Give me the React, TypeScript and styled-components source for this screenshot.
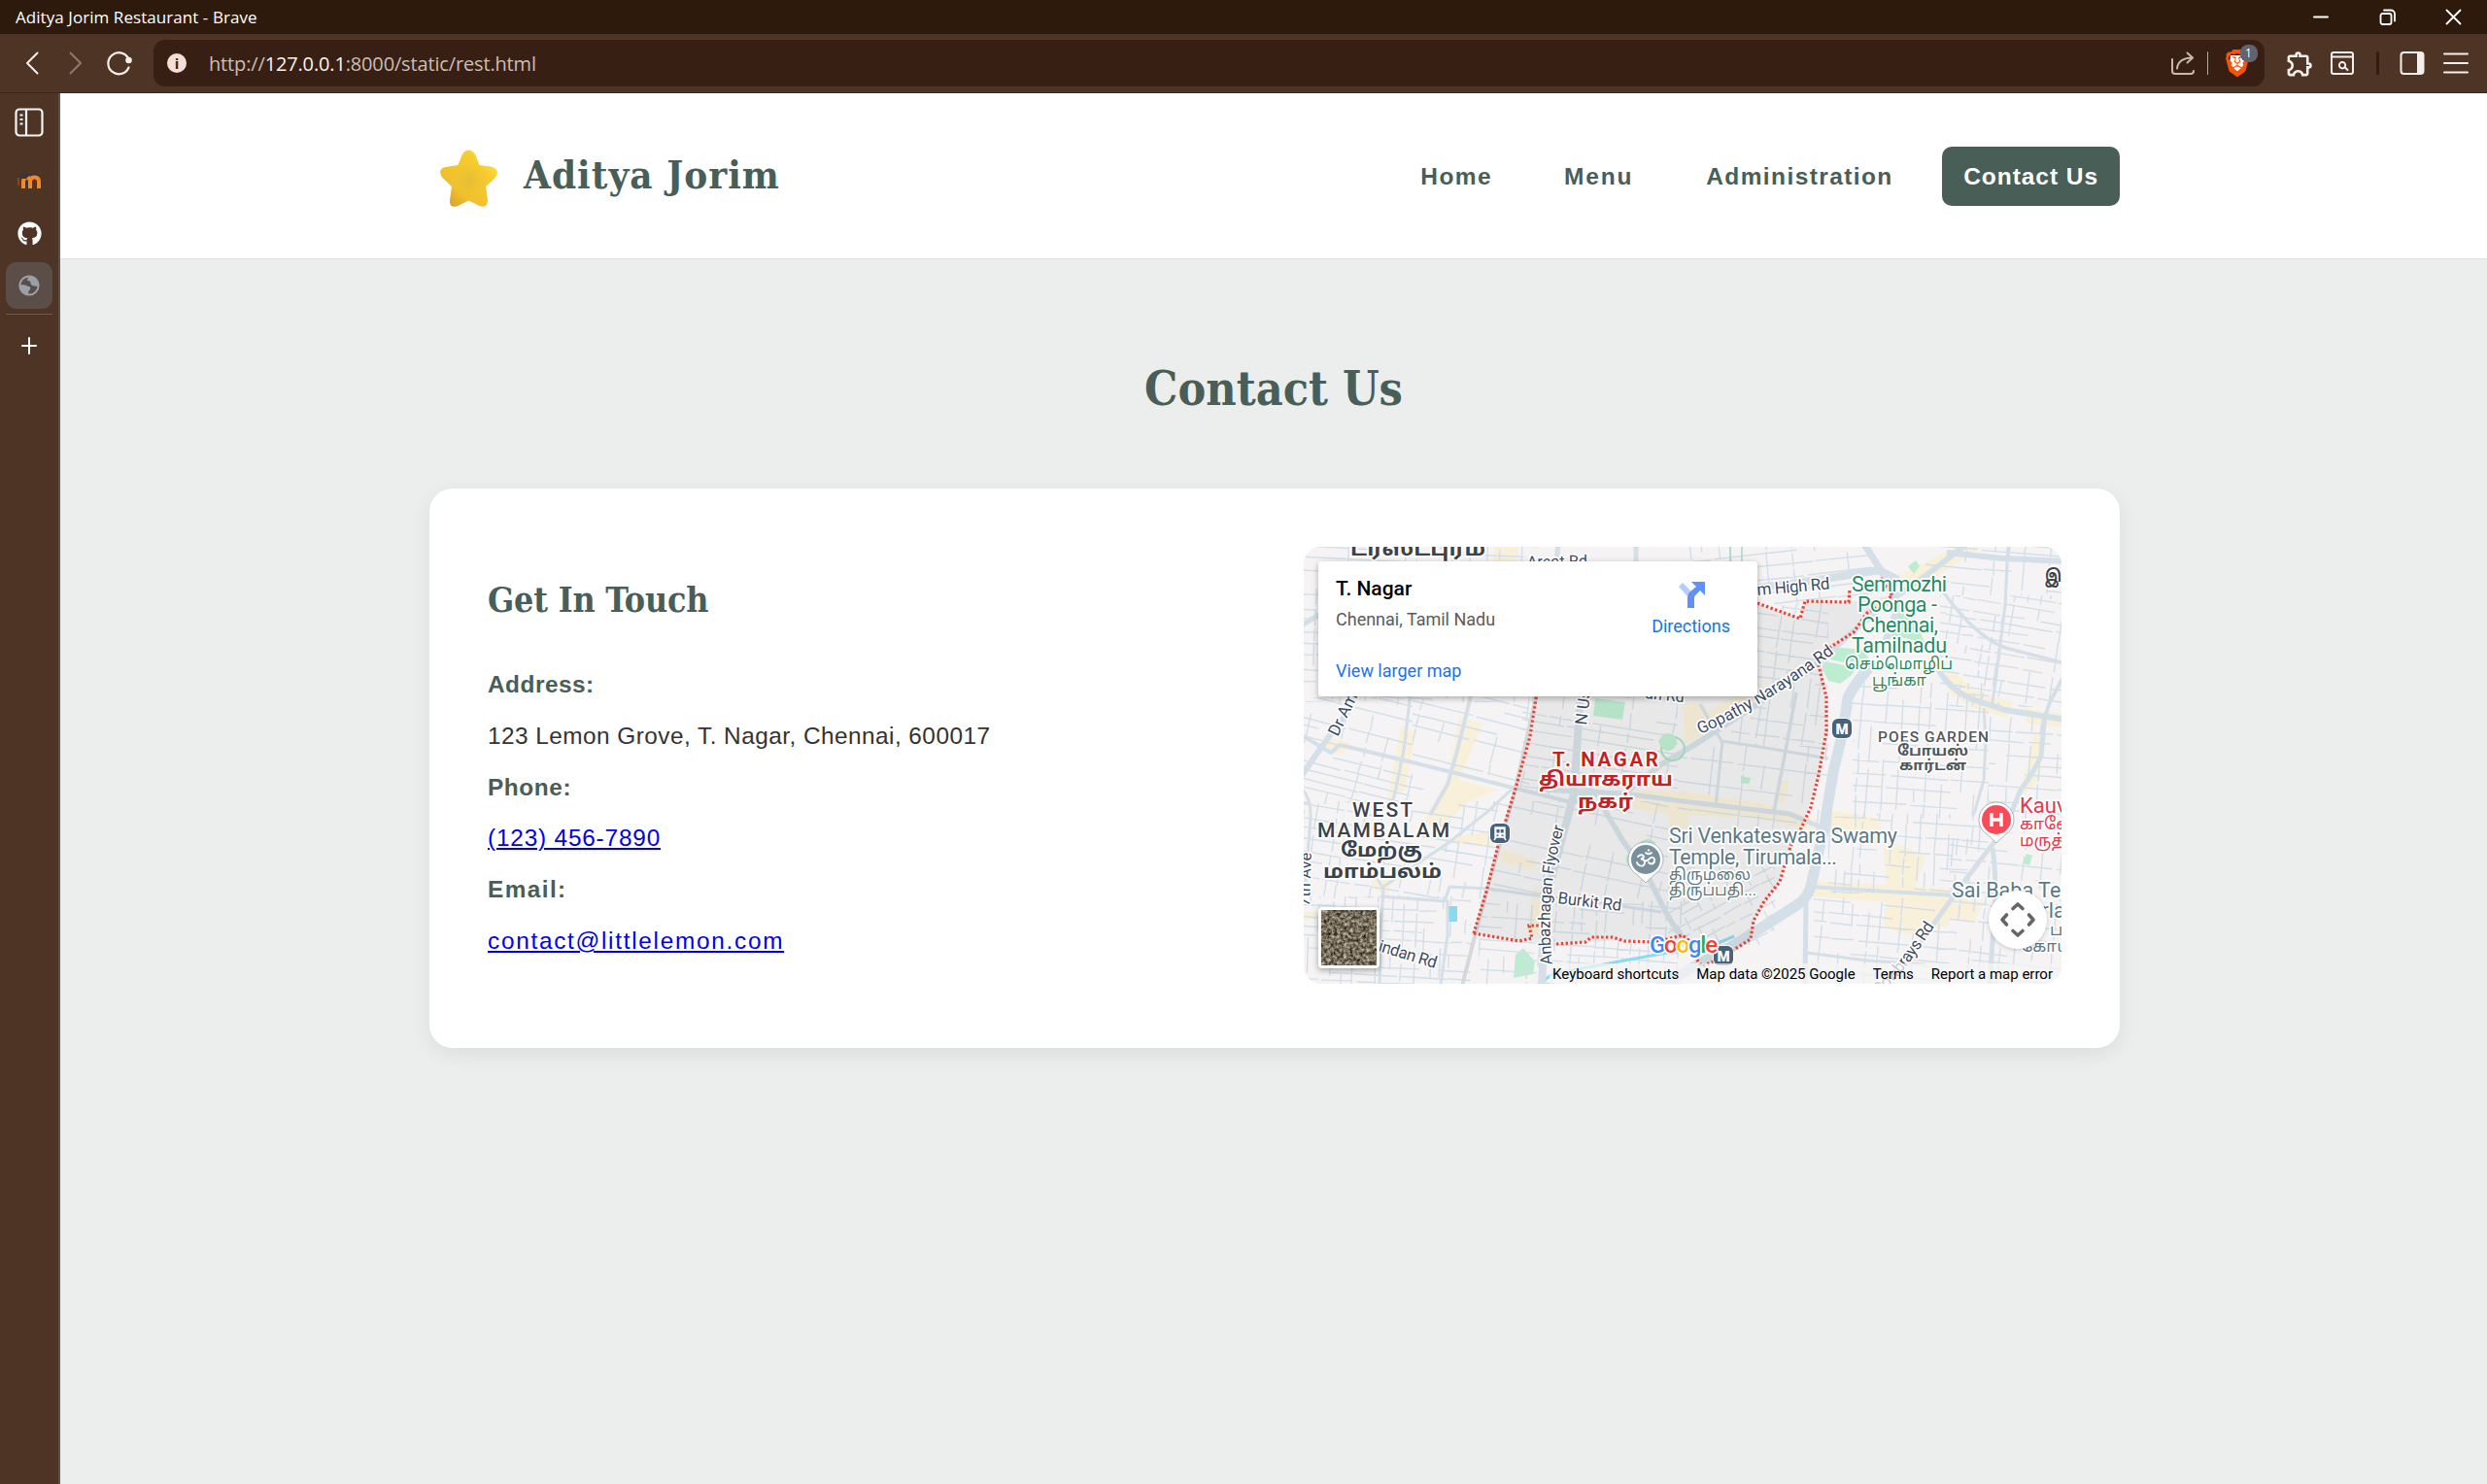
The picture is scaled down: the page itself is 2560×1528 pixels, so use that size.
import React from "react";
import styled, { createGlobalStyle } from "styled-components";
import { FaGithub } from "react-icons/fa";
import { MdOutlineExtension } from "react-icons/md";
import { SiBrave } from "react-icons/si";

const C = {
  title: "#2d1a0c",
  toolbar: "#4e3425",
  field: "#371f13",
  green: "#495e57",
  page: "#eceeed",
};

const GlobalStyle = createGlobalStyle`
  * { box-sizing: border-box; }
  body { margin: 0; background: ${C.page}; font-family: "Liberation Sans", Arial, sans-serif; }
  svg { display: block; }
`;

const Window = styled.div`
  display: flex;
  flex-direction: column;
  width: 2560px;
  height: 1528px;
  overflow: hidden;
`;

const ui = `"Open Sans", "Noto Sans", sans-serif`;

const TitleBar = styled.div`
  display: flex;
  align-items: center;
  justify-content: space-between;
  height: 35px;
  padding-left: 16px;
  background: ${C.title};
  color: #fff;
  font: 400 17px/35px ${ui};
`;

const Track = styled.span<{ $ls: number }>`
  letter-spacing: ${(p) => p.$ls}px;
  white-space: pre;
`;

const Row = styled.div`
  display: flex;
  align-items: center;
`;

const Slot = styled.div<{ $w: number }>`
  display: flex;
  align-items: center;
  justify-content: center;
  width: ${(p) => p.$w}px;
  flex: none;
`;

const Toolbar = styled.div`
  display: flex;
  align-items: center;
  height: 61px;
  padding: 0 9px 0 10px;
  background: ${C.toolbar};
  border-bottom: 1px solid #3b261b;
  color: #f4efec;
`;

const AddressBar = styled.div`
  display: flex;
  align-items: center;
  flex: 1;
  height: 48px;
  margin: 0 14px 0 13px;
  border-radius: 12px;
  background: ${C.field};
`;

const Info = styled.div`
  width: 20px;
  height: 20px;
  margin-left: 14px;
  border-radius: 50%;
  background: #f3dfd7;
  color: ${C.field};
  font: 700 15px/20px ${ui};
  text-align: center;
`;

const Url = styled.div`
  flex: 1;
  margin-left: 23px;
  padding-top: 1px;
  color: #cdbdb3;
  font: 400 20px/47px ${ui};
  b { font-weight: 400; color: #fbf3ee; }
`;

const Rule = styled.div<{ $w: number; $c: string }>`
  width: ${(p) => p.$w}px;
  height: 24px;
  border-radius: 1px;
  background: ${(p) => p.$c};
`;

const Shield = styled.div`
  position: relative;
  width: 24px;
  height: 28px;
  color: #fb5208;
`;

const ShieldMark = styled(SiBrave)`
  position: absolute;
  left: -2px;
  top: 0;
`;

const Badge = styled.div`
  position: absolute;
  left: 15px;
  top: -5px;
  width: 18px;
  height: 18px;
  border-radius: 8px;
  background: #62636e;
  color: #fff;
  font: 400 12px/18px ${ui};
  text-align: center;
`;

const Body = styled.div`
  display: flex;
  flex: 1;
  min-height: 0;
`;

const Side = styled.div`
  display: flex;
  flex-direction: column;
  align-items: center;
  width: 62px;
  padding-top: 14px;
  border-right: 2px solid #5d5150;
  background: ${C.toolbar};
`;

const SideItem = styled.div<{ $h: number; $mb?: number; $active?: boolean }>`
  display: flex;
  align-items: center;
  justify-content: center;
  width: 48px;
  height: ${(p) => p.$h}px;
  margin-bottom: ${(p) => p.$mb ?? 0}px;
  border-radius: 11px;
  background: ${(p) => (p.$active ? "#5b4e49" : "transparent")};
  color: ${(p) => (p.$active ? "#9aa0a8" : "#fff")};
`;

const SideRule = styled.div`
  width: 48px;
  height: 1px;
  background: #6a5a54;
`;

const Page = styled.div`
  display: flex;
  flex-direction: column;
  flex: 1;
  background: ${C.page};
`;

const SiteHeader = styled.header`
  display: flex;
  align-items: center;
  justify-content: space-between;
  height: 171px;
  padding: 0 378px 0 380px;
  background: #fff;
  border-bottom: 1px solid #dee0df;
`;

const serif = `"DejaVu Serif Condensed", "DejaVu Serif", serif`;

const Logo = styled(Row)`
  padding-left: 8px;
  gap: 24px;
`;

const StarBox = styled.div`
  padding-top: 6px;
`;

const Brand = styled.div`
  padding-bottom: 3px;
  color: ${C.green};
  font: 700 40px/60px ${serif};
  font-stretch: condensed;
`;

const Nav = styled.nav`
  display: flex;
  align-items: center;
`;

const NavLink = styled.a<{ $mr?: number; $active?: boolean }>`
  display: block;
  height: 61px;
  margin-right: ${(p) => p.$mr ?? 0}px;
  padding: ${(p) => (p.$active ? "1px 22px 0" : "1px 0 0")};
  border-radius: 10px;
  background: ${(p) => (p.$active ? C.green : "transparent")};
  color: ${(p) => (p.$active ? "#fff" : C.green)};
  font-weight: 700;
  font-size: 24.5px;
  line-height: 60px;
`;

const Heading = styled.h1`
  margin: 103px 0 73px;
  color: ${C.green};
  font: 700 48px/60px ${serif};
  font-stretch: condensed;
  text-align: center;
`;

const Card = styled.section`
  display: grid;
  grid-template-columns: 780px 780px;
  column-gap: 60px;
  width: 1740px;
  height: 576px;
  margin-left: 380px;
  padding: 60px;
  border-radius: 24px;
  background: #fff;
  box-shadow: 0 6px 22px rgba(0, 0, 0, 0.07);
`;

const Touch = styled.div`
  padding-top: 28px;
  font-size: 24.4px;
  line-height: 52.8px;
  color: #333;
`;

const SubHeading = styled.h2`
  margin: 0 0 34px;
  color: ${C.green};
  font: 700 35.5px/54px ${serif};
  font-stretch: condensed;
`;

const Term = styled.div`
  color: ${C.green};
  font-weight: 700;
`;

const Link = styled.a`
  color: #0000ee;
  text-decoration: underline;
  text-decoration-thickness: 2px;
  text-underline-offset: 2px;
`;

const MapFrame = styled.div`
  position: relative;
  width: 780px;
  height: 450px;
  overflow: hidden;
  border-radius: 18px;
  background: #f5f3f4;
  font-family: Roboto, sans-serif;
`;

const PlaceCard = styled.div`
  position: absolute;
  left: 15px;
  top: 15px;
  display: flex;
  justify-content: space-between;
  width: 452px;
  height: 139px;
  padding: 15px 28px 0 18px;
  border-radius: 3px;
  background: #fff;
  box-shadow: 0 2px 6px rgba(0, 0, 0, 0.3);
  font-size: 18px;
  color: #5b5b5b;
`;

const PlaceName = styled.div`
  color: #000;
  font-weight: 500;
  font-size: 21px;
  line-height: 26px;
`;

const PlaceLine = styled.div<{ $mt: number; $link?: boolean }>`
  margin-top: ${(p) => p.$mt}px;
  line-height: 24px;
  color: ${(p) => (p.$link ? "#1a73e8" : "#5b5b5b")};
`;

const Directions = styled.div`
  display: flex;
  flex-direction: column;
  align-items: center;
  padding-top: 6px;
  gap: 6px;
  line-height: 24px;
  color: #1a73e8;
`;

const Thumb = styled.div`
  position: absolute;
  left: 15px;
  top: 371px;
  width: 63px;
  height: 63px;
  border: 3px solid #fff;
  border-radius: 4px;
  overflow: hidden;
  background: #7d7160;
  box-shadow: 0 2px 6px rgba(0, 0, 0, 0.35);
`;

const Camera = styled.div`
  position: absolute;
  left: 705px;
  top: 354px;
  width: 60px;
  height: 60px;
  border-radius: 50%;
  background: #fff;
  box-shadow: 0 1px 4px rgba(0, 0, 0, 0.2);
`;

const Footer = styled.div`
  position: absolute;
  right: 0;
  bottom: 0;
  display: flex;
  height: 21px;
  padding: 0 9px 0 3px;
  gap: 18px;
  background: rgba(245, 245, 245, 0.72);
  color: #000;
  font-size: 15px;
  line-height: 22px;
`;

function rng(seed: number) {
  let s = seed;
  return () => {
    s = (s * 1664525 + 1013904223) % 4294967296;
    return s / 4294967296;
  };
}

type Zone = { x: number; y: number; w: number; h: number; a: number; gx: number; gy: number };

const zones: Zone[] = [
  { x: 0, y: 0, w: 240, h: 160, a: 3, gx: 17, gy: 12 },
  { x: 0, y: 155, w: 112, h: 110, a: 14, gx: 24, gy: 11 },
  { x: 112, y: 155, w: 120, h: 95, a: 14, gx: 30, gy: 11 },
  { x: 0, y: 262, w: 200, h: 100, a: 9, gx: 15, gy: 13 },
  { x: 0, y: 360, w: 172, h: 90, a: 3, gx: 11, gy: 12 },
  { x: 225, y: 155, w: 160, h: 100, a: 9, gx: 34, gy: 11 },
  { x: 195, y: 262, w: 180, h: 100, a: 12, gx: 30, gy: 14 },
  { x: 180, y: 365, w: 210, h: 85, a: 4, gx: 14, gy: 12 },
  { x: 385, y: 0, w: 200, h: 60, a: -6, gx: 20, gy: 13 },
  { x: 440, y: 60, w: 100, h: 145, a: 8, gx: 13, gy: 14 },
  { x: 385, y: 205, w: 155, h: 90, a: 7, gx: 26, gy: 20 },
  { x: 375, y: 330, w: 110, h: 80, a: -28, gx: 10, gy: 9 },
  { x: 565, y: 140, w: 140, h: 140, a: 4, gx: 17, gy: 17 },
  { x: 540, y: 275, w: 165, h: 82, a: 4, gx: 11, gy: 12 },
  { x: 525, y: 362, w: 140, h: 88, a: 5, gx: 16, gy: 15 },
  { x: 655, y: 50, w: 125, h: 115, a: 9, gx: 12, gy: 11 },
  { x: 640, y: 0, w: 140, h: 50, a: 5, gx: 22, gy: 14 },
  { x: 705, y: 175, w: 75, h: 120, a: 4, gx: 16, gy: 14 },
  { x: 665, y: 300, w: 115, h: 150, a: 6, gx: 16, gy: 14 },
];

const zonePath = (z: Zone, seed: number) => {
  const r = rng(seed);
  const m = 30;
  const out: string[] = [];
  for (let y = -m; y < z.h + m; y += z.gy * (0.6 + r() * 0.8)) {
    let x = -m;
    while (x < z.w + m) {
      const len = z.gx * (1 + r() * 3.5);
      if (r() > 0.24) out.push(`M${x.toFixed(1)} ${y.toFixed(1)}l${len.toFixed(1)} ${((r() - 0.5) * 2).toFixed(1)}`);
      x += len + r() * 5;
    }
  }
  for (let x = -m; x < z.w + m; x += z.gx * (0.6 + r() * 0.8)) {
    let y = -m;
    while (y < z.h + m) {
      const len = z.gy * (0.6 + r() * 2.6);
      if (r() > 0.38) out.push(`M${x.toFixed(1)} ${y.toFixed(1)}l${((r() - 0.5) * 2).toFixed(1)} ${len.toFixed(1)}`);
      y += len + r() * 7;
    }
  }
  return out.join("");
};

const roads: [string, number][] = [
  ["M-5 240L12 215L30 190L44 172L52 150", 6],
  ["M-4 193L28 212L37 204L100 219L160 234L215 248L275 263", 4],
  ["M110 150L103 210L92 262", 3],
  ["M173 150L158 210L148 245L130 276", 4],
  ["M216 248L190 272L150 304L82 350L79 400L78 452", 3],
  ["M-3 248Q8 258 7 280L2 345", 3],
  ["M82 352L72 336M79 360L145 365L150 350L190 352L232 358L300 366L368 376", 3],
  ["M148 365L148 400L141 450", 3],
  ["M285 150L282 195L278 255L266 300L250 360L245 452", 8],
  ["M280 262L308 268L330 305L352 335L372 375L394 412", 5.5],
  ["M240 250L330 254L390 262L500 275L545 294", 5],
  ["M330 254L368 224L402 204L470 160L520 128L560 92L600 58L640 30L684 -4", 6],
  ["M586 120Q566 142 560 156L555 190L545 232L535 292L523 345Q520 362 506 370L440 412L395 436L365 454", 11],
  ["M380 62L470 42L530 34L592 24L612 34", 8],
  ["M576 -4L594 24L612 62L598 100", 7],
  ["M655 42Q690 92 722 104L784 120", 3.5],
  ["M650 120Q662 146 688 157L722 168L784 178", 6],
  ["M662 6L720 12L784 15", 6],
  ["M763 172L759 215Q752 232 738 250L722 290L700 318L676 350L640 400L602 454", 5],
  ["M700 166L702 200L700 240L690 275", 3],
  ["M709 310Q712 330 712 360L706 452", 5],
  ["M522 350L600 355L672 359", 4],
  ["M517 366L516 452", 5],
  ["M725 -4L722 60L712 140L708 166", 3],
  ["M784 130L768 160L763 175", 4],
  ["M408 162L430 200L470 206L540 218", 3],
  ["M507 150L496 210L484 272", 3.5],
  ["M431 200L424 268", 3],
  ["M518 418L580 426L640 430", 3],
  ["M-4 82L22 66L40 60", 5],
  ["M342 -4L342 16M262 -4L260 16", 5],
];

const yellows = [
  "M100 185L116 190L104 250L86 262L94 218Z",
  "M160 175L184 182L160 240L200 250L170 262L140 292L124 284L148 238Z",
  "M22 196L48 202L40 214L24 210Z",
  "M205 312L240 322L236 334L203 324Z",
  "M150 300L196 292L194 310L150 304Z",
  "M340 250L394 252L470 264L530 282L524 292L470 280L390 276L340 270Z",
  "M372 262L396 268L396 310L378 300Z",
  "M490 240L500 242L494 264L484 262Z",
  "M536 270L594 280L592 306L534 294Z",
  "M596 300L640 318L630 350L600 352Z",
  "M524 344L600 348L664 352L664 390L620 400L596 390L600 366L524 360Z",
  "M664 360L700 366L690 386L664 382Z",
  "M612 30L680 -4L704 -4L640 38L622 44Z",
  "M660 120L690 148L730 160L724 176L690 166L664 150Z",
  "M740 166L784 172L784 186L744 182Z",
  "M752 190L764 196L756 240L734 262L744 230Z",
  "M390 160L412 162L424 186L392 204Z",
  "M402 176L470 140L472 150L410 184Z",
  "M196 0L222 0L218 20L196 14Z",
  "M0 376L20 376L20 384L0 384Z",
  "M72 330L90 344L86 362L70 350Z",
  "M236 352L250 352L240 402L230 396Z",
];

const greens = [
  "M300 156L331 160L328 178L298 174Z",
  "M280 252L302 250L302 258L286 260Z",
  "M540 103L576 106L582 116L560 120L542 116Z",
  "M536 118L568 124L564 132L552 141L540 138L534 126Z",
  "M605 70L620 68L630 78L640 100L620 94L600 92Z",
  "M622 20L630 14L634 20L628 28Z",
  "M218 420L226 413L238 427L236 440L216 444Z",
  "M450 236L460 238L458 244L450 243Z",
  "M744 316L750 318L747 328L740 326Z",
  "M342 310Q350 296 362 304L360 312ZM332 318L340 312L338 330Q330 328 332 318Z",
];

const boundaryWest = "M240 150L233 195L218 249L200 308L188 355L175 398";
const boundarySouth = "M175 398L222 406L235 403L232 390L243 390M260 409L290 407L296 402L318 402L330 406L362 407L390 400L396 405L404 424L410 432L424 426L444 414L460 404L463 385L474 365L490 345L498 318L504 300L512 290L522 268L530 235L538 190L538 155L530 122";
const boundaryNorth = "M467 58L511 74L516 56L561 57L562 44M541 104L566 88L580 68L594 60L606 50L594 32";
const district =
  "M240 150L233 195L218 249L200 308L188 355L175 398L222 406L290 407L396 402L410 432L444 414L460 404L463 385L474 365L490 345L498 318L512 290L530 235L538 190L538 155L530 122L541 104L606 50L561 57L516 56L511 74L440 50L240 50Z";

type Label = {
  t: string; x: number; y: number; w?: number; s: number; c: string; b?: number; r?: number; g?: boolean;
};
const slate = "#5b7988";
const park = "#1f8d61";
const dark = "#3c4248";
const road = "#3d4a63";
const red = "#c5221f";
const labels: Label[] = [
  { t: "டரஸ்டபுரம்", x: 48, y: 9, w: 139, s: 21, c: dark, b: 700, g: true },
  { t: "Arcot Rd", x: 230, y: 21, w: 62, s: 16, c: road, r: -1 },
  { t: "WEST", x: 50, y: 278, w: 62, s: 21, c: dark, b: 500 },
  { t: "MAMBALAM", x: 14, y: 299, w: 136, s: 21, c: dark, b: 500 },
  { t: "மேற்கு", x: 38, y: 319, w: 84, s: 20, c: dark, b: 700, g: true },
  { t: "மாம்பலம்", x: 20, y: 341, w: 122, s: 20, c: dark, b: 700, g: true },
  { t: "Sri Venkateswara Swamy", x: 376, y: 305, w: 235, s: 21.5, c: slate },
  { t: "Temple, Tirumala...", x: 376, y: 327, w: 173, s: 21.5, c: slate },
  { t: "திருமலை", x: 376, y: 343, w: 84, s: 17, c: slate, g: true },
  { t: "திருப்பதி...", x: 376, y: 359, w: 90, s: 17, c: slate, g: true },
  { t: "POES GARDEN", x: 591, y: 201, w: 114, s: 15.5, c: "#50565c", b: 500 },
  { t: "போயஸ்", x: 611, y: 215, w: 73, s: 15, c: "#50565c", b: 700, g: true },
  { t: "கார்டன்", x: 613, y: 230, w: 69, s: 15, c: "#50565c", b: 700, g: true },
  { t: "Semmozhi", x: 564, y: 46, w: 98, s: 21.5, c: park },
  { t: "Poonga -", x: 570, y: 67, w: 82, s: 21.5, c: park },
  { t: "Chennai,", x: 574, y: 88, w: 79, s: 21.5, c: park },
  { t: "Tamilnadu", x: 564, y: 109, w: 98, s: 21.5, c: park },
  { t: "செம்மொழிப்", x: 557, y: 126, w: 111, s: 17, c: park, g: true },
  { t: "பூங்கா", x: 585, y: 143, w: 56, s: 17, c: park, g: true },
  { t: "Kauvery", x: 737, y: 274, s: 22, c: "#e2394f" },
  { t: "காவேரி", x: 737, y: 291, s: 17, c: "#e2394f" },
  { t: "மருத்துவமனை", x: 737, y: 308, s: 17, c: "#e2394f" },
  { t: "Sai Baba Temple", x: 667, y: 361, w: 160, s: 21.5, c: slate },
  { t: "erla", x: 748, y: 382, s: 21.5, c: slate },
  { t: "ப ட", x: 768, y: 400, s: 17, c: slate },
  { t: "கோய", x: 738, y: 417, s: 17, c: slate },
  { t: "இ", x: 763, y: 36, w: 17, s: 18, c: dark, b: 700, g: true },
  { t: "Burkit Rd", x: 261, y: 367, w: 66, s: 17, c: road, r: 7 },
  { t: "N Us", x: 291, y: 184, s: 17, c: road, r: -83 },
  { t: "an Rd", x: 351, y: 156, s: 16, c: road, r: 6 },
  { t: "m High Rd", x: 467, y: 50, w: 75, s: 17, c: road, r: -5 },
  { t: "Dr Am", x: 35, y: 196, s: 17, c: road, r: -64 },
  { t: "7th Ave", x: 6, y: 370, w: 55, s: 16, c: road, r: -88 },
  { t: "indan Rd", x: 76, y: 416, w: 62, s: 17, c: road, r: 17 },
  { t: "T. NAGAR", x: 256, y: 226, w: 109, s: 20.5, c: red, b: 700 },
  { t: "தியாகராய", x: 242, y: 246, w: 138, s: 20, c: red, b: 700, g: true },
  { t: "நகர்", x: 282, y: 269, w: 57, s: 20, c: red, b: 700, g: true },
];

const MapLabel = styled.text`
  font-family: Roboto, "Noto Sans Tamil", "Noto Sans", sans-serif;
  paint-order: stroke;
  stroke: #fff;
  stroke-width: 3.5px;
  stroke-linejoin: round;
`;

const Curved = ({ id, d, s, w, children }: { id: string; d: string; s: number; w: number; children: string }) => (
  <g>
    <path id={id} d={d} fill="none" />
    <MapLabel fontSize={s} fill={road}>
      <textPath href={`#${id}`} textLength={w}>{children}</textPath>
    </MapLabel>
  </g>
);

const Station = ({ x, y }: { x: number; y: number }) => (
  <g transform={`translate(${x} ${y})`}>
    <rect x={-11} y={-11} width={22} height={22} rx={7} fill="#fff" opacity={0.9} />
    <rect x={-10} y={-10} width={20} height={20} rx={6} fill="#47627a" />
  </g>
);

const Pin = ({ x, y, c, children }: { x: number; y: number; c: string; children: React.ReactNode }) => (
  <g transform={`translate(${x} ${y})`}>
    <path d="M0 24L-9 15.5A18 18 0 1 1 9 15.500Z" fill="#fff" stroke="#8d999f" strokeOpacity={0.7} />
    <circle r={15} fill={c} />
    {children}
  </g>
);

function CityMap() {
  return (
    <svg width={780} height={450} viewBox="0 0 780 450">
      <defs>
        {zones.map((z, i) => (
          <clipPath key={i} id={`zone${i}`}>
            <rect x={z.x} y={z.y} width={z.w} height={z.h} />
          </clipPath>
        ))}
      </defs>
      <rect width={780} height={450} fill="#f5f3f4" />
      {yellows.map((d) => <path key={d} d={d} fill="#f9f0da" />)}
      {greens.map((d) => <path key={d} d={d} fill="#bdedd0" />)}
      {zones.map((z, i) => (
        <g key={i} clipPath={`url(#zone${i})`}>
          <path
            d={zonePath(z, 11 + i * 97)}
            transform={`translate(${z.x} ${z.y}) rotate(${z.a} ${z.w / 2} ${z.h / 2})`}
            stroke="#d3dfe8"
            strokeWidth={1.4}
            fill="none"
          />
        </g>
      ))}
      <path d="M240 452L256 440L330 426L385 416M424 409L443 401" stroke="#8bdcee" strokeWidth={3} fill="none" />
      <path d="M148 370h10v16h-10z" fill="#8bd9ef" />
      <path d="M240 150L218 249L188 355L163 452" stroke="#d4d8db" strokeWidth={4} fill="none" />
      {roads.map(([d, w]) => (
        <path key={d} d={d} stroke="#d4dfe7" strokeWidth={w} fill="none" strokeLinejoin="round" />
      ))}
      <circle cx={380} cy={208} r={12} fill="none" stroke="#a5e0c0" strokeWidth={2} />
      <circle cx={375} cy={201} r={9} fill="#bdedd0" />
      <path d="M439 0v15M451 0v15" stroke="#8fd6b2" strokeWidth={1.2} />
      <path d={district} fill="#6b6b6b" fillOpacity={0.08} />
      <g fill="none" stroke="#ea4335" strokeWidth={3.2} strokeDasharray="2.4 2.4">
        <path d={boundaryWest} />
        <path d={boundarySouth} />
        <path d={boundaryNorth} />
      </g>
      {labels.map((l) => (
        <MapLabel
          key={l.t}
          x={l.x}
          y={l.y}
          fill={l.c}
          fontSize={l.s}
          fontWeight={l.b ?? 400}
          textLength={l.w}
          lengthAdjust={l.g ? "spacingAndGlyphs" : "spacing"}
          transform={l.r ? `rotate(${l.r} ${l.x} ${l.y})` : undefined}
        >
          {l.t}
        </MapLabel>
      ))}
      <Curved id="flyover" s={17} w={143} d="M256 430Q247 350 271 280">Anbazhagan Flyover</Curved>
      <Curved id="gopathy" s={17} w={162} d="M408 193Q475 164 548 108">Gopathy Narayana Rd</Curved>
      <Curved id="cowbrays" s={17} w={92} d="M592 462Q615 444 653 385">Cowbrays Rd</Curved>
      <Station x={554} y={187} />
      <Station x={432} y={421} />
      <Station x={202} y={295} />
      <g fill="#fff" fontFamily="Roboto, sans-serif" fontWeight={900} fontSize={15} textAnchor="middle">
        <text x={554} y={192.5}>M</text>
        <text x={432} y={426.5}>M</text>
      </g>
      <g transform="translate(202 295)">
        <path d="M-5 -6h10v10h-10zM-4 4l-2 3M4 4l2 3" fill="#fff" stroke="#fff" strokeWidth={1.4} />
        <path d="M-3.500 -4h3v3.600h-3zM.7 -4h3v3.600h-3zM-3.500 1.500h2v1.600h-2zM1.600 1.500h2v1.600h-2z" fill="#47627a" />
      </g>
      <Pin x={352} y={322} c="#78909c">
        <g fill="none" stroke="#fff" strokeWidth={1.9} strokeLinecap="round">
          <path d="M-8 -3Q-5 -6 -2.5 -4Q-1 -1.5 -5 -.5Q-.5 0 -1 4Q-2.5 8 -6.500 6Q-9 4.500 -9 3M-1.500 1Q2 2 4 -1Q7 -4 9 -.5Q9.500 4 6 4.500Q4 4.500 3 3M0 -7Q3 -4.500 6 -7" />
        </g>
        <circle cx={3} cy={-9.500} r={1.2} fill="#fff" />
      </Pin>
      <Pin x={713} y={281} c="#fb4b58">
        <path d="M-5 -7v14M5 -7v14M-5 0h10" stroke="#fff" strokeWidth={3.4} fill="none" />
      </Pin>
      <MapLabel x={356} y={418} fontSize={24} textLength={70} fontWeight={500}>
        <tspan fill="#4285f4">G</tspan>
        <tspan fill="#ea4335">o</tspan>
        <tspan fill="#fbbc04">o</tspan>
        <tspan fill="#4285f4">g</tspan>
        <tspan fill="#34a853">l</tspan>
        <tspan fill="#ea4335">e</tspan>
      </MapLabel>
    </svg>
  );
}

const starPath = "M30 .5Q35 .5 37.500 7L41 16L53 17.500Q61 20 59 26Q57.500 30 47.500 38L49.500 52Q49.500 61 41 58L30 52.500L19 58Q10 61 10.500 52L12.500 38L2 28Q-2 20 6 18L19 16L22.500 7Q25 .5 30 .5Z";

function Star() {
  return (
    <svg width={65} height={60} viewBox="0 0 65 60">
      <defs>
        <linearGradient id="starFill" x1="0" y1="1" x2="1" y2="0">
          <stop offset="0" stopColor="#cf962f" />
          <stop offset=".3" stopColor="#f1bf2c" />
          <stop offset=".7" stopColor="#f6cc2f" />
          <stop offset="1" stopColor="#fff04a" />
        </linearGradient>
        <radialGradient id="starCore">
          <stop offset="0" stopColor="#e2bd38" />
          <stop offset="1" stopColor="#f2c531" stopOpacity="0" />
        </radialGradient>
      </defs>
      <g transform="translate(2.5 0)">
        <path d={starPath} fill="url(#starFill)" />
        <circle cx={30} cy={32} r={20} fill="url(#starCore)" />
      </g>
    </svg>
  );
}

const Line = ({ w, h, d, sw = 2, c = "currentColor" }: { w: number; h: number; d: string; sw?: number; c?: string }) => (
  <svg width={w} height={h} viewBox={`0 0 ${w} ${h}`} fill="none" stroke={c} strokeWidth={sw} strokeLinecap="round" strokeLinejoin="round">
    <path d={d} />
  </svg>
);

export default function App() {
  return (
    <Window>
      <GlobalStyle />
      <TitleBar>
        <Track $ls={0.06}>Aditya Jorim Restaurant - Brave</Track>
        <Row>
          <Slot $w={68.5}><Line w={16} h={16} d="M1 7.500h14" /></Slot>
          <Slot $w={68.5}><Line w={17} h={17} sw={1.8} d="M3.500 5h7a2 2 0 0 1 2 2v7a2 2 0 0 1-2 2h-7a2 2 0 0 1-2-2v-7a2 2 0 0 1 2-2zM5 1.500h7a4 4 0 0 1 4 4v7" /></Slot>
          <Slot $w={68.5}><Line w={17} h={17} sw={1.8} d="M1.500 1.500l14 14M15.500 1.500l-14 14" /></Slot>
        </Row>
      </TitleBar>
      <Toolbar>
        <Slot $w={45}><Line w={14} h={24} d="M12.500 1.500L2 12l10.500 10.500" /></Slot>
        <Slot $w={45}><Line w={14} h={24} c="#8f786c" d="M1.500 1.500L12 12L1.500 22.500" /></Slot>
        <Slot $w={45}>
          <svg width={28} height={28} viewBox="0 0 28 28" fill="none" stroke="currentColor" strokeWidth={2.2} strokeLinecap="round">
            <path d="M23.500 18.500A11 11 0 1 1 23.500 10" />
            <circle cx={23.500} cy={11} r={2.200} fill="currentColor" />
          </svg>
        </Slot>
        <AddressBar>
          <Info>i</Info>
          <Url><Track $ls={-0.15}>http://<b>127.0.0.1</b>:8000/static/rest.html</Track></Url>
          <Slot $w={32}><Line w={26} h={26} c="#cbb8ad" d="M2 9v12a3 3 0 0 0 3 3h16a3 3 0 0 0 3-3M7 18.500Q8 8 22 7.500M17.500 2.500l5.500 5l-5.500 5" /></Slot>
          <Slot $w={18}><Rule $w={1} $c="#b7aaa2" /></Slot>
          <Slot $w={43}>
            <Shield>
              <svg width={24} height={28} viewBox="0 0 24 28"><path d="M5 6h14l1 9l-8 9l-8-9z" fill="#fff" /></svg>
              <ShieldMark size={28} />
              <Badge>1</Badge>
            </Shield>
          </Slot>
          <Slot $w={7} />
        </AddressBar>
        <Slot $w={44}><MdOutlineExtension size={31} /></Slot>
        <Slot $w={44}>
          <Line w={26} h={26} d="M4 2h18a2 2 0 0 1 2 2v18a2 2 0 0 1-2 2h-18a2 2 0 0 1-2-2v-18a2 2 0 0 1 2-2zM2 6.500h22M13 12a3.200 3.200 0 1 0 .1 0M15.500 17l3 3" />
        </Slot>
        <Slot $w={28}><Rule $w={3} $c="#331b0f" /></Slot>
        <Slot $w={44}>
          <svg width={26} height={26} viewBox="0 0 26 26" fill="none" stroke="currentColor" strokeWidth={2}>
            <rect x={1.500} y={2} width={23} height={22} rx={3} />
            <path d="M18 2h5a2 2 0 0 1 2 2v18a2 2 0 0 1-2 2h-5z" fill="currentColor" stroke="none" />
          </svg>
        </Slot>
        <Slot $w={46}><Line w={26} h={26} d="M1 3.500h24M1 13h24M1 22.500h24" /></Slot>
      </Toolbar>
      <Body>
        <Side>
          <SideItem $h={32} $mb={20}>
            <svg width={30} height={30} viewBox="0 0 30 30" fill="none" stroke="#f4f4f4" strokeWidth={2.2}>
              <rect x={1.500} y={1.500} width={27} height={27} rx={3.500} />
              <path d="M12 1.500v27" />
              <path d="M5.500 7.500h3M5.500 12h3M5.500 16.500h3" />
            </svg>
          </SideItem>
          <SideItem $h={48} $mb={6}>
            <svg width={26} height={20} viewBox="0 0 26 20" fill="none">
              <path d="M7 18v-7q0-4.500 3.500-4.500t3.500 4.500v7M14 11q0-4.500 4.500-4.500t4.500 4.500v7" stroke="#ee8a2b" strokeWidth={4} />
              <path d="M1 6L8 2L15 3L10 8L5 8Z" fill="#3d3434" />
              <path d="M2 7v8" stroke="#7d4a25" strokeWidth={2} />
            </svg>
          </SideItem>
          <SideItem $h={48} $mb={6}><FaGithub size={25} /></SideItem>
          <SideItem $h={48} $mb={5} $active>
            <svg width={24} height={24} viewBox="0 0 24 24">
              <circle cx={12} cy={12} r={9.600} fill="none" stroke="currentColor" strokeWidth={2} />
              <path d="M13 2.500Q9 5 10.500 7Q14 7 13.500 10Q14.500 13 18 12.500L21.500 13Q22 6 17 3.500Z" fill="currentColor" />
              <path d="M2.500 11L8 11.500Q11 13 13 13.500Q14 16 11.500 17.500L11 21.500Q3 20 2.500 11Z" fill="currentColor" />
            </svg>
          </SideItem>
          <SideRule />
          <SideItem $h={64}><Line w={16} h={18} d="M1 9h14M8 1v16" /></SideItem>
        </Side>
        <Page>
          <SiteHeader>
            <Logo>
              <StarBox><Star /></StarBox>
              <Brand><Track $ls={1}>Aditya Jorim</Track></Brand>
            </Logo>
            <Nav>
              <NavLink $mr={74}><Track $ls={1.4}>Home</Track></NavLink>
              <NavLink $mr={75}><Track $ls={1.8}>Menu</Track></NavLink>
              <NavLink $mr={50.5}><Track $ls={1.4}>Administration</Track></NavLink>
              <NavLink $active><Track $ls={0.95}>Contact Us</Track></NavLink>
            </Nav>
          </SiteHeader>
          <Heading><Track $ls={0}>Contact Us</Track></Heading>
          <Card>
            <Touch>
              <SubHeading><Track $ls={-0.2}>Get In Touch</Track></SubHeading>
              <Term><Track $ls={0.5}>Address:</Track></Term>
              <div><Track $ls={0.45}>123 Lemon Grove, T. Nagar, Chennai, 600017</Track></div>
              <Term><Track $ls={0.6}>Phone:</Track></Term>
              <div><Link><Track $ls={0.8}>(123) 456-7890</Track></Link></div>
              <Term><Track $ls={1.4}>Email:</Track></Term>
              <div><Link><Track $ls={1.7}>contact@littlelemon.com</Track></Link></div>
            </Touch>
            <MapFrame>
              <CityMap />
              <PlaceCard>
                <div>
                  <PlaceName>T. Nagar</PlaceName>
                  <PlaceLine $mt={7}>Chennai, Tamil Nadu</PlaceLine>
                  <PlaceLine $mt={29} $link>View larger map</PlaceLine>
                </div>
                <Directions>
                  <svg width={28} height={28} viewBox="0 0 28 28">
                    <path d="M1 5L5 1L14 10L10 15Z" fill="#b3cdfd" />
                    <path d="M14 0H28V14L23 9L18 14Q17 15 17 17V27H10V16Q10 13 12 11L19 5Z" fill="#5e92f8" />
                  </svg>
                  <span>Directions</span>
                </Directions>
              </PlaceCard>
              <Thumb>
                <svg width={57} height={57}>
                  <filter id="terrain" x="0" y="0" width="100%" height="100%" colorInterpolationFilters="sRGB">
                    <feTurbulence type="fractalNoise" baseFrequency="0.3" numOctaves={3} seed={8} />
                    <feColorMatrix values="1 .15 0 0 -.11  1 .1 0 0 -.12  .95 .05 0 0 -.14  0 0 0 0 1" />
                  </filter>
                  <rect width={57} height={57} filter="url(#terrain)" />
                </svg>
              </Thumb>
              <Camera>
                <Line w={60} h={60} sw={3.6} c="#666" d="M25 18.500l5-4.500l5 4.500M25 41.500l5 4.500l5-4.500M18.500 25l-4.500 5l4.500 5M41.500 25l4.500 5l-4.500 5" />
              </Camera>
              <Footer>
                <span>Keyboard shortcuts</span>
                <span>Map data ©2025 Google</span>
                <span>Terms</span>
                <span>Report a map error</span>
              </Footer>
            </MapFrame>
          </Card>
        </Page>
      </Body>
    </Window>
  );
}
